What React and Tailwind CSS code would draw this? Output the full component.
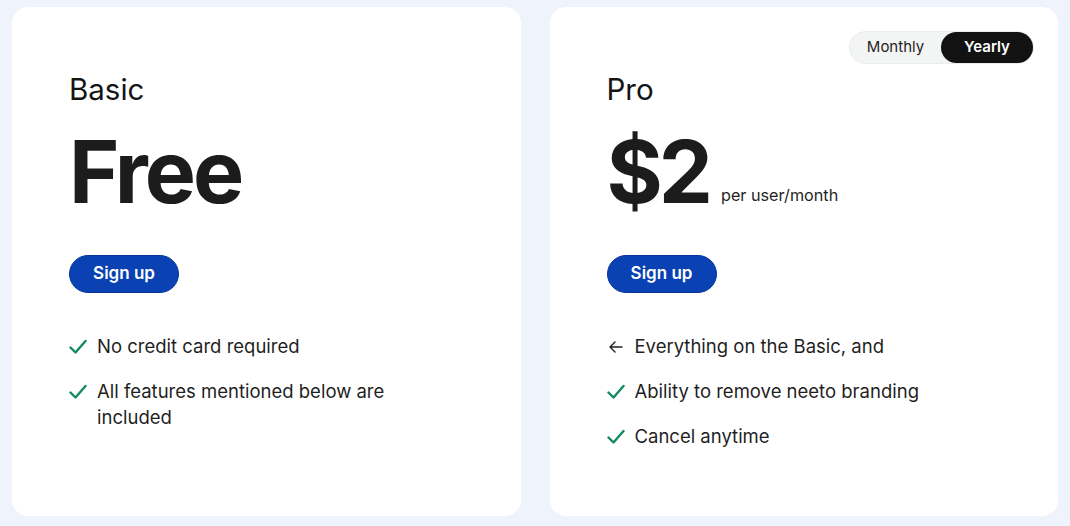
const Check = () => (
  <svg width="18" height="16" viewBox="0 0 18 16" fill="none" className="shrink-0 mt-[6px]">
    <path d="M1.5 8.5 L6.5 13.5 L16.5 2" stroke="#138a5c" strokeWidth="2.4" strokeLinecap="round" strokeLinejoin="round" />
  </svg>
)

const ArrowLeft = () => (
  <svg width="18" height="16" viewBox="0 0 18 16" fill="none" className="shrink-0 mt-[6px]">
    <path d="M15 8 H3 M8 3 L3 8 L8 13" stroke="#1f1f1f" strokeWidth="1.4" strokeLinecap="round" strokeLinejoin="round" />
  </svg>
)

const Feature = ({ icon, children }) => (
  <li className="flex items-start gap-[10px]">
    {icon === 'arrow' ? <ArrowLeft /> : <Check />}
    <span className="text-[18.5px] leading-[26px] text-[#1f1f1f]">{children}</span>
  </li>
)

const SignUp = () => (
  <button className="h-[38px] w-[110px] rounded-full bg-[#0a42b3] border border-[#08379a] text-white text-[17px] font-semibold">
    Sign up
  </button>
)

function PlanCard({ name, children, features, toggle }) {
  return (
    <div className="relative bg-white rounded-[16px] pl-[57px] pr-[40px] pt-[64px]">
      {toggle}
      <h2 className="text-[29.5px] leading-[36px] text-[#141414]">{name}</h2>
      <div className="mt-[22px]">{children}</div>
      <div className="mt-[40px]">
        <SignUp />
      </div>
      <ul className="mt-[40px] flex flex-col gap-[19px] max-w-[330px]">
        {features.map((f, i) => (
          <Feature key={i} icon={f.icon}>{f.text}</Feature>
        ))}
      </ul>
    </div>
  )
}

export default function App() {
  return (
    <div
      className="h-[526px] w-full bg-[#eff3fb] grid grid-cols-2 gap-[29px] pl-[12px] pr-[12px] pt-[7px] pb-[10px]"
      style={{ fontFamily: 'Inter, "Liberation Sans", sans-serif' }}
    >
      <PlanCard
        name="Basic"
        features={[
          { text: 'No credit card required' },
          { text: 'All features mentioned below are included' },
        ]}
      >
        <div className="text-[86px] leading-[86px] font-bold text-[#1c1c1c] tracking-[-3px]">Free</div>
      </PlanCard>
      <PlanCard
        name="Pro"
        toggle={
          <div className="absolute top-[24px] right-[24px] flex h-[33px] w-[185px] rounded-full bg-[#f3f4f4] border border-[#ebebeb]">
            <button className="flex-1 text-[15px] text-[#1f1f1f]">Monthly</button>
            <button className="w-[92px] rounded-full bg-[#121212] text-white text-[15px] font-semibold">Yearly</button>
          </div>
        }
        features={[
          { icon: 'arrow', text: 'Everything on the Basic, and' },
          { text: 'Ability to remove neeto branding' },
          { text: 'Cancel anytime' },
        ]}
      >
        <div className="flex items-baseline gap-[12px]">
          <span className="text-[86px] leading-[86px] font-bold text-[#1c1c1c] tracking-[-4px]">$2</span>
          <span className="text-[16.2px] text-[#1f1f1f] relative -top-[2px]">per user/month</span>
        </div>
      </PlanCard>
    </div>
  )
}
